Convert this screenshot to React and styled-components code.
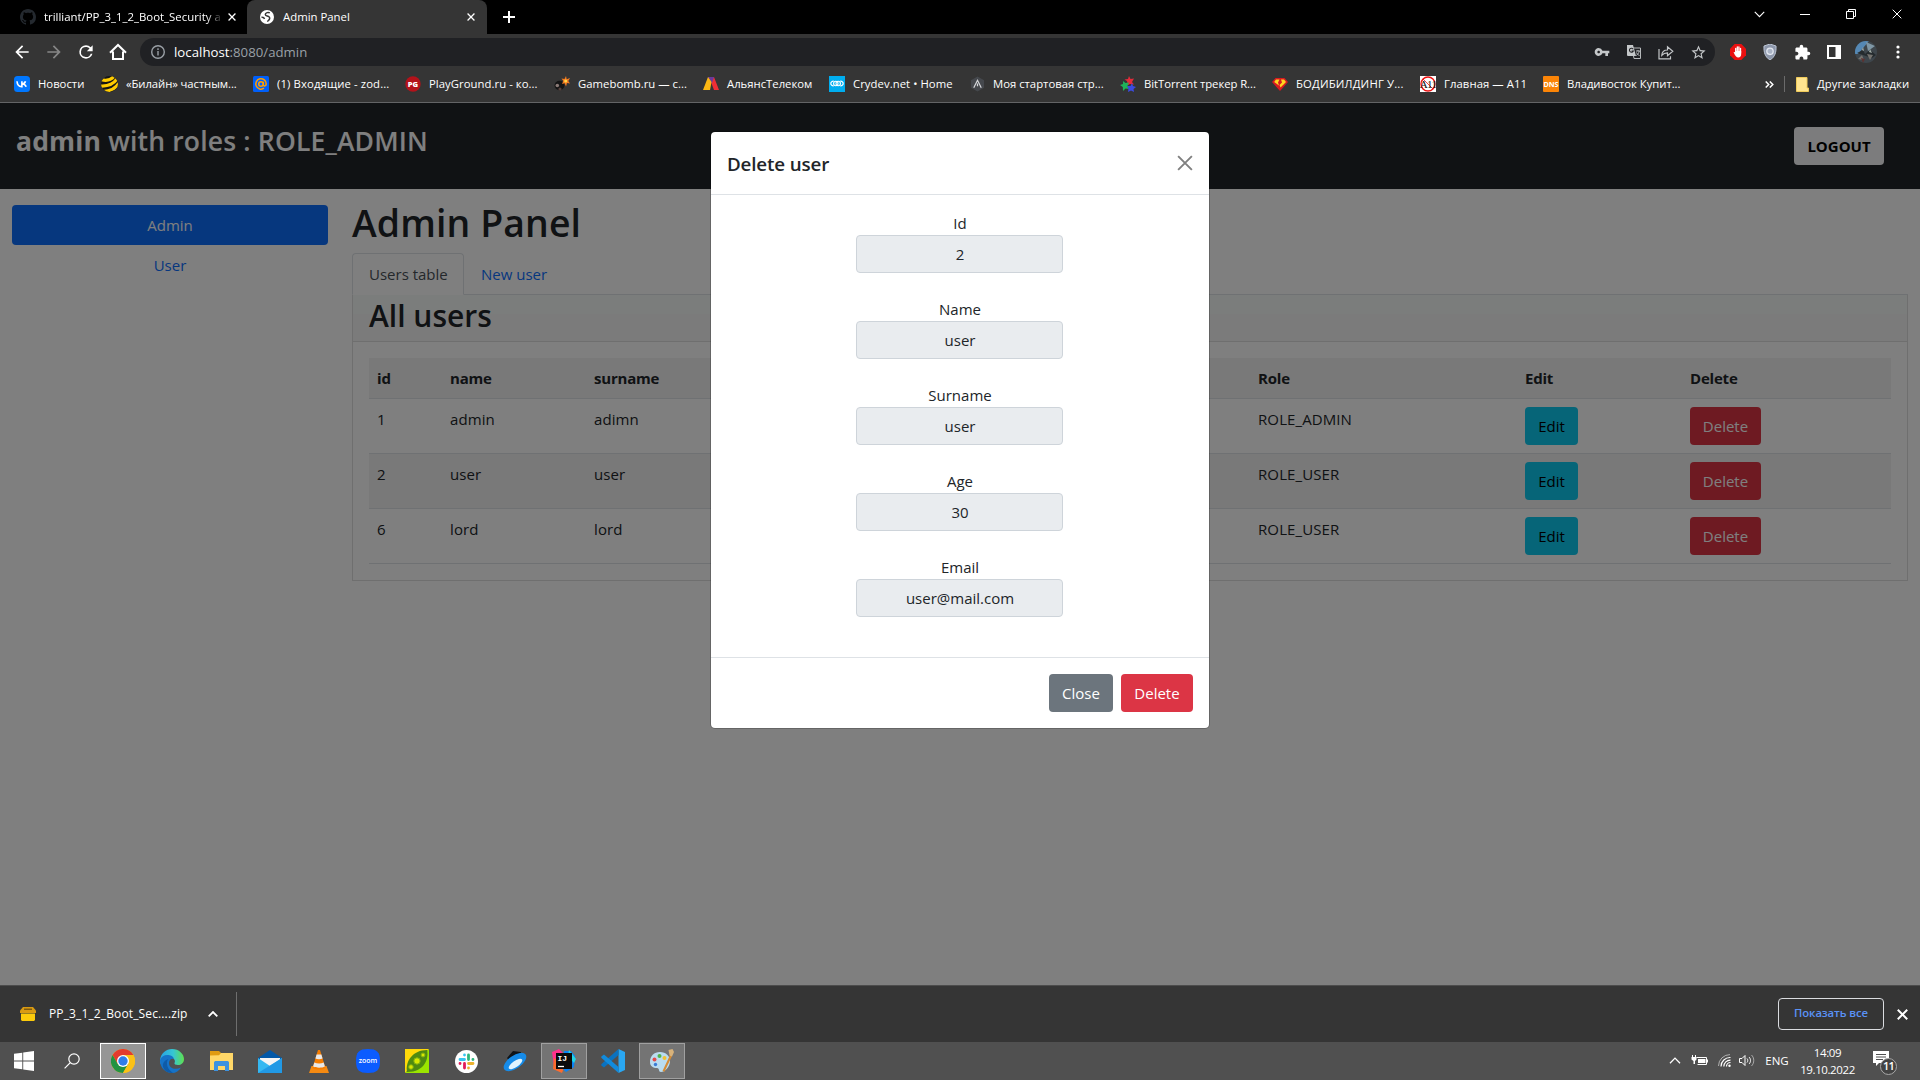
import React from "react";
import styled, { createGlobalStyle } from "styled-components";

const GlobalStyle = createGlobalStyle`
  * { box-sizing: border-box; }
  html, body { margin: 0; padding: 0; background: #000; overflow: hidden; }
  body { font-family: "Open Sans", "Noto Sans", sans-serif; font-size: 15px; line-height: 24px; color: #212529; }
  svg { display: block; flex: none; }
`;

const Screen = styled.div`
  width: 1920px;
  height: 1080px;
  display: flex;
  flex-direction: column;
  overflow: hidden;
`;

/* ---------- browser chrome ---------- */
const TabStrip = styled.div`
  height: 34px;
  background: #000;
  display: flex;
  align-items: stretch;
  color: #fff;
  font-size: 11.4px;
  line-height: 34px;
`;
const Tab = styled.div`
  width: ${(p) => p.$w}px;
  padding: 0 ${(p) => (p.$active ? 12 : 11)}px 0 ${(p) => p.$pl}px;
  display: flex;
  align-items: center;
  gap: 8px;
  background: ${(p) => (p.$active ? "#353535" : "transparent")};
  border-radius: 8px 8px 0 0;
`;
const TabTitle = styled.span`
  flex: 1;
  min-width: 0;
  white-space: nowrap;
  letter-spacing: ${(p) => p.$ls || 0}px;
  ${(p) => p.$fade && "mask-image: linear-gradient(90deg, #000 92%, transparent 102%);"}
`;
const PlusBox = styled.div`
  width: 44px;
  display: flex;
  align-items: center;
  justify-content: center;
`;
const WindowControls = styled.div`
  margin-left: auto;
  padding-bottom: 6px;
  display: flex;
`;
const WindowButton = styled.div`
  width: 46px;
  display: flex;
  align-items: center;
  justify-content: center;
`;

const Toolbar = styled.div`
  height: 34px;
  background: #353535;
  display: flex;
  align-items: center;
  padding: 2px 6px 0 6px;
`;
const ToolIcon = styled.div`
  width: 32px;
  height: 28px;
  display: flex;
  align-items: center;
  justify-content: center;
  color: ${(p) => p.$c || "#fff"};
`;
const AddressBar = styled.div`
  height: 28px;
  width: 1575px;
  margin: 0 7px 0 6px;
  padding: 0 1px 0 10px;
  border-radius: 14px;
  background: #202124;
  display: flex;
  align-items: center;
  font-size: 13.2px;
  color: #9aa0a6;
`;
const Url = styled.span`
  flex: 1;
  margin-left: 8px;
  letter-spacing: 0.03px;
  b { font-weight: 400; color: #fff; }
`;

const BookmarksBar = styled.div`
  height: 35px;
  background: #353535;
  border-bottom: 1px solid #636466;
  padding: 0 0 2px 14px;
  display: flex;
  align-items: center;
  font-size: 11.3px;
  line-height: 16px;
  color: #fff;
`;
const Bookmark = styled.div`
  width: ${(p) => p.$w}px;
  display: flex;
  align-items: center;
  gap: 8px;
  white-space: nowrap;
  letter-spacing: ${(p) => p.$ls || 0}px;
`;
const BookmarksEnd = styled.div`
  margin-left: auto;
  padding-right: 10px;
  display: flex;
  align-items: center;
  white-space: nowrap;
`;
const BarDivider = styled.div`
  width: 1px;
  height: 16px;
  background: #6b6b6b;
  margin: 0 11px 0 10px;
`;

/* ---------- page ---------- */
const Page = styled.main`
  position: relative;
  height: 882px;
  background: #fff;
`;
const Navbar = styled.header`
  height: 86px;
  background: #212529;
  padding: 24px 36px 0 16px;
  display: flex;
  justify-content: space-between;
  align-items: flex-start;
`;
const Brand = styled.div`
  font-size: 26.5px;
  line-height: 28px;
  font-weight: 600;
  color: #fff;
  white-space: nowrap;
  letter-spacing: 0.17px;
  b { font-weight: 700; }
`;
const Btn = styled.button`
  height: 38px;
  width: ${(p) => p.$w}px;
  border: 0;
  padding: 0 0 1px;
  border-radius: 4px;
  background: ${(p) => p.$bg};
  color: ${(p) => p.$c || "#fff"};
  font: ${(p) => (p.$bold ? 700 : 400)} 15px/24px "Open Sans", "Noto Sans", sans-serif;
`;
const Columns = styled.div`
  display: flex;
  padding: 16px 12px 0 12px;
`;
const Sidebar = styled.nav`
  width: 316px;
  margin-right: 24px;
  text-align: center;
`;
const Pill = styled.div`
  height: 40px;
  padding-top: 8px;
  border-radius: 4px;
  line-height: 24px;
  background: ${(p) => (p.$active ? "#0d6efd" : "transparent")};
  color: ${(p) => (p.$active ? "#fff" : "#0d6efd")};
`;
const Content = styled.section`
  width: 1556px;
`;
const PageTitle = styled.h1`
  margin: 0;
  height: 48px;
  font-size: 37.4px;
  line-height: 36px;
  font-weight: 600;
  letter-spacing: 0.1px;
`;
const Tabs = styled.div`
  height: 42px;
  display: flex;
  border-bottom: 1px solid #dee2e6;
`;
const NavTab = styled.div`
  height: 42px;
  width: ${(p) => p.$w}px;
  padding: 8px 16px 0;
  white-space: nowrap;
  border: 1px solid ${(p) => (p.$active ? "#dee2e6" : "transparent")};
  border-bottom-color: ${(p) => (p.$active ? "#fff" : "transparent")};
  border-radius: 4px 4px 0 0;
  color: ${(p) => (p.$active ? "#495057" : "#0d6efd")};
`;
const Card = styled.div`
  border: 1px solid #dfdfdf;
  border-top: 0;
`;
const CardHeader = styled.div`
  height: 47px;
  padding: 0 16px;
  background: linear-gradient(#f7fbf9 0 19px, #f7f7f7 19px);
  border-bottom: 1px solid #dfdfdf;
  font-size: 30px;
  line-height: 41px;
  font-weight: 600;
`;
const CardBody = styled.div`
  padding: 16px;
`;
const Table = styled.div`
  display: flex;
  flex-direction: column;
`;
const Row = styled.div`
  display: grid;
  grid-template-columns: 73px 144px 664px 267px 165px 1fr;
  height: ${(p) => (p.$head ? 41 : 55)}px;
  background: ${(p) => (p.$shade ? "#f2f2f2" : "transparent")};
  border-bottom: 1px solid #dee2e6;
  font-weight: ${(p) => (p.$head ? 700 : 400)};
  letter-spacing: ${(p) => (p.$head ? -0.2 : 0.1)}px;
`;
const Cell = styled.div`
  padding: 8px 8px 0;
`;

/* ---------- modal ---------- */
const Backdrop = styled.div`
  position: absolute;
  inset: 0;
  background: rgba(0, 0, 0, 0.5);
  display: flex;
  justify-content: center;
  align-items: flex-start;
  padding-top: 28px;
`;
const Modal = styled.div`
  width: 500px;
  background: #fff;
  background-clip: padding-box;
  border: 1px solid rgba(0, 0, 0, 0.2);
  border-radius: 5px;
`;
const ModalHeader = styled.div`
  height: 63px;
  padding: 1px 16px 0;
  display: flex;
  align-items: center;
  justify-content: space-between;
  border-bottom: 1px solid #dee2e6;
  font-size: 18.8px;
  font-weight: 600;
  letter-spacing: -0.15px;
  svg { margin-top: -2px; }
`;
const ModalBody = styled.div`
  padding: 16px;
  height: 462px;
  display: flex;
  flex-direction: column;
  align-items: center;
  gap: 24px;
`;
const Field = styled.label`
  display: flex;
  flex-direction: column;
  align-items: center;
  line-height: 24px;
  height: 62px;
`;
const Value = styled.div`
  width: 207px;
  height: 38px;
  margin-right: 1px;
  padding: 6px 0 0 1px;
  text-align: center;
  background: #e9ecef;
  border: 1px solid #ced4da;
  border-radius: 4px;
`;
const ModalFooter = styled.div`
  height: 71px;
  border-top: 1px solid #dee2e6;
  padding: 16px;
  display: flex;
  justify-content: flex-end;
  gap: 8px;
`;

/* ---------- downloads shelf ---------- */
const Shelf = styled.div`
  height: 57px;
  background: #353535;
  border-top: 1px solid #4c4c4c;
  display: flex;
  align-items: center;
  padding: 0 12px 0 20px;
  color: #fff;
  font-size: 12px;
`;
const FileName = styled.span`
  margin-left: 13px;
  width: 159px;
  white-space: nowrap;
  letter-spacing: 0.13px;
`;
const ShelfDivider = styled.div`
  width: 1px;
  height: 44px;
  margin-left: 18px;
  background: #6e6e6e;
`;
const ShowAll = styled.div`
  margin: 0 13px 1px auto;
  width: 106px;
  height: 32px;
  border: 1px solid #dadce0;
  border-radius: 4px;
  color: #5a92f5;
  font-size: 11.3px;
  font-weight: 600;
  line-height: 28px;
  text-align: center;
  letter-spacing: -0.1px;
`;

/* ---------- taskbar ---------- */
const Taskbar = styled.div`
  height: 38px;
  background: #505050;
  display: flex;
  align-items: center;
  color: #fff;
`;
const TaskItem = styled.div`
  width: ${(p) => p.$w || 46}px;
  height: 36px;
  margin-right: ${(p) => p.$mr ?? 3}px;
  display: flex;
  align-items: center;
  justify-content: center;
  border: 1px solid ${(p) => (p.$active ? "#fff" : p.$open ? "#a0a0a0" : "transparent")};
  background: ${(p) => (p.$active ? "#969696" : p.$open ? "#747474" : "transparent")};
`;
const Tray = styled.div`
  margin-left: auto;
  display: flex;
  align-items: center;
  padding: 0 29px 1px 0;
`;
const TrayText = styled.span`
  width: ${(p) => p.$w}px;
  margin-left: ${(p) => p.$ml || 0}px;
  font-size: 11.5px;
  line-height: 17px;
  display: flex;
  flex-direction: column;
  align-items: center;
  white-space: nowrap;
  letter-spacing: ${(p) => p.$ls || 0}px;
`;
const Slot = styled.div`
  margin-left: ${(p) => p.$ml}px;
`;
const Notice = styled.div`
  position: relative;
  margin-left: 18px;
  width: 18px;
  height: 20px;
`;
const NoticeBadge = styled.span`
  position: absolute;
  left: 7px;
  top: 7px;
  width: 17px;
  height: 17px;
  border-radius: 9px;
  border: 1px solid #a8a8a8;
  background: #434343;
  font-size: 11px;
  font-weight: 600;
  line-height: 14px;
  text-align: center;
  letter-spacing: -0.7px;
`;

/* ---------- icons ---------- */
const M = ({ d, s = 20, ...r }) => (
  <svg width={s} height={s} viewBox="0 0 24 24" fill="currentColor" {...r}><path d={d} /></svg>
);
const Cross = ({ s = 8, w = 1.6, c = "#fff" }) => (
  <svg width={s} height={s} viewBox="0 0 10 10" stroke={c} strokeWidth={w}><path d="M.7.7 9.3 9.3M9.3.7.7 9.3" /></svg>
);
const Chevron = ({ w = 10, h = 6, up, sw = 1.3 }) => (
  <svg width={w} height={h} viewBox="0 0 10 6" fill="none" stroke="#fff" strokeWidth={sw}>
    <path d={up ? "M.7 5.3 5 1l4.3 4.3" : "M.7.7 5 5 9.3.7"} />
  </svg>
);
const Github = () => (
  <svg width="16" height="16" viewBox="0 0 16 16" fill="#24292f"><path d="M8 0C3.58 0 0 3.58 0 8c0 3.54 2.29 6.53 5.47 7.59.4.07.55-.17.55-.38 0-.19-.01-.82-.01-1.49-2.01.37-2.53-.49-2.69-.94-.09-.23-.48-.94-.82-1.13-.28-.15-.68-.52-.01-.53.63-.01 1.08.58 1.23.82.72 1.21 1.87.87 2.33.66.07-.52.28-.87.51-1.07-1.78-.2-3.64-.89-3.64-3.95 0-.87.31-1.59.82-2.15-.08-.2-.36-1.02.08-2.12 0 0 .67-.21 2.2.82.64-.18 1.32-.27 2-.27s1.36.09 2 .27c1.53-1.04 2.2-.82 2.2-.82.44 1.1.16 1.92.08 2.12.51.56.82 1.27.82 2.15 0 3.07-1.87 3.75-3.65 3.95.29.25.54.73.54 1.48 0 1.07-.01 1.93-.01 2.2 0 .21.15.46.55.38A8.01 8.01 0 0 0 16 8c0-4.42-3.58-8-8-8z" /></svg>
);
const Globe = () => (
  <svg width="14" height="14" viewBox="0 0 14 14"><circle cx="7" cy="7" r="7" fill="#fff" /><path d="M9.800 2.800C8.300 2 5.500 2.600 5.300 4.400c-.2 1.700 1.500 1.500 2.700 1.900 1.500.5 2.200 1.800 1.300 3.200-.6.9-1.600 1-1.700 2.300M1.500 7.200c1.300-.1 2.700.5 3 1.800" fill="none" stroke="#353535" strokeWidth="1.500" /></svg>
);

const VkIcon = () => (
  <svg width="16" height="16" viewBox="0 0 16 16"><rect width="16" height="16" rx="3.5" fill="#07f" /><path d="M3 5.300c.2 3.200 1.800 5.400 4.600 5.400h.3V5.300M7.900 8c1.900 0 3.100-1.100 3.600-2.700M8 8c2 0 3.500 1.100 4.200 2.700" fill="none" stroke="#fff" strokeWidth="1.600" /></svg>
);
const BeelineIcon = () => (
  <svg width="17" height="16" viewBox="0 0 17 16"><defs><clipPath id="bee"><ellipse cx="8.500" cy="8" rx="8.500" ry="7.900" /></clipPath></defs><g clipPath="url(#bee)"><rect width="17" height="16" fill="#161616" /><g fill="none" stroke="#fc0" strokeWidth="3.200"><path d="M0 3.500Q8 6 13 .5M0 10Q11 10.500 16 3M2 15.500Q13 15 18 7" /></g></g></svg>
);
const AtIcon = () => (
  <svg width="16" height="16" viewBox="0 0 16 16"><rect width="16" height="16" rx="1.500" fill="#005ff9" /><g fill="none" stroke="#ff9e00" strokeWidth="1.500"><circle cx="8" cy="8" r="2.300" /><path d="M10.300 5.800v3c0 1.800 2.900 1.500 2.900-.8A5.200 5.200 0 1 0 11 12.200" /></g></svg>
);
const PgIcon = () => (
  <svg width="16" height="16" viewBox="0 0 16 16"><circle cx="8" cy="8" r="7.700" fill="#b3121a" /><text x="8" y="11" textAnchor="middle" fontSize="7.500" fontWeight="800" fill="#fff" fontFamily="Open Sans">PG</text></svg>
);
const BombIcon = () => (
  <svg width="16" height="16" viewBox="0 0 16 16"><ellipse cx="5.500" cy="9.500" rx="5" ry="4.700" fill="#151515" /><circle cx="3.300" cy="9.500" r="1.800" fill="#8b7b77" /><circle cx="6" cy="13" r="1.600" fill="#57413c" /><path d="M12 0l.7 3.200L16 2l-1.700 3 1.700 2.500-3-.5-1 3.500-1.300-3.300L8 8l1.300-3L7.500 2.500l3 .6z" fill="#f47b20" /><circle cx="11.700" cy="5" r="1.500" fill="#ffd84a" /></svg>
);
const AllianceIcon = () => (
  <svg width="16" height="16" viewBox="0 0 16 16"><path d="M5 1h6l5 13h-5L8 6z" fill="#ee2e36" /><path d="M5 1h6L9 7 6 6z" fill="#683a9c" /><path d="M5 1l3.500 5L7 14H0z" fill="#fdb813" /></svg>
);
const CrydevIcon = () => (
  <svg width="16" height="16" viewBox="0 0 16 16"><rect width="16" height="16" fill="#00adef" /><g fill="none" stroke="#fff" strokeWidth="1.100"><path d="M4.800 5C3 5.200 1.800 6.200 1.800 7.500S3 9.800 4.800 10M11.200 5c1.800.2 3 1.200 3 2.500s-1.200 2.300-3 2.500" /><circle cx="6.800" cy="7.500" r="2.200" /><circle cx="9.200" cy="7.500" r="2.200" /></g></svg>
);
const HexIcon = () => (
  <svg width="15" height="16" viewBox="0 0 16 16"><path d="M8 0l7 4v8l-7 4-7-4V4z" fill="#45484d" /><path d="M4 12l4-8 4 8M8 7.500v3" fill="none" stroke="#d5d7da" strokeWidth="1.300" /></svg>
);
const TrackerIcon = () => (
  <svg width="16" height="16" viewBox="0 0 16 16"><path d="M9 0l1.500 3 3.500-.5-2 3.500 2 2.500-4-.5L8 9 7 5 4.500 3.500 8 3z" fill="#e62b3a" /><path d="M3 5l2.500 2L9 6.500 7.500 10 9 13l-3.500-.5L3 15l-.2-4L0 9l3-1z" fill="#1fb25a" /><path d="M12 7l1 3 3 1-2.500 2 .5 3-3-1.500L8 16l.5-3.500L7 10l3.500 0z" fill="#3b4be0" /></svg>
);
const HeroIcon = () => (
  <svg width="16" height="14" viewBox="0 0 16 14"><path d="M3.500 1h9L16 5l-8 9L0 5z" fill="#d91920" /><path d="M4 2.500h3.500L6 5.500l1 3L2.200 5zM9 2.500h3L14 5l-5.500 5.500L7.500 8 10 5.500z" fill="#ffd51e" /></svg>
);
const A11Icon = () => (
  <svg width="16" height="16" viewBox="0 0 16 16"><rect width="16" height="16" fill="#fff" /><circle cx="8" cy="8" r="7" fill="none" stroke="#e11" strokeWidth="1.400" /><path d="M3 3l10 10" stroke="#e11" strokeWidth=".8" /><text x="8" y="12" textAnchor="middle" fontSize="11" letterSpacing="-.6" fill="#111" fontFamily="Liberation Serif">A11</text></svg>
);
const DnsIcon = () => (
  <svg width="16" height="16" viewBox="0 0 16 16"><rect width="16" height="16" rx="1" fill="#fc8507" /><text x="8" y="11" textAnchor="middle" fontSize="7.200" fontWeight="700" fill="#fff" fontFamily="Open Sans">DNS</text></svg>
);
const FolderNote = () => (
  <svg width="13" height="15" viewBox="0 0 13 15"><path d="M.5.500h10.500v10.500h1.500v3.500H.5z" fill="#ffe48f" stroke="#f0cb5a" /></svg>
);

const bookmarks = [
  [87, "Новости", VkIcon, 0],
  [152, "«Билайн» частным...", BeelineIcon, -0.08],
  [152, "(1) Входящие - zod...", AtIcon, 0.12],
  [149, "PlayGround.ru - ко...", PgIcon, 0.05],
  [149, "Gamebomb.ru — с...", BombIcon, 0.04],
  [126, "АльянсТелеком", AllianceIcon, 0],
  [141, "Crydev.net • Home", CrydevIcon, 0.06],
  [150, "Моя стартовая стр...", HexIcon, 0],
  [152, "BitTorrent трекер R...", TrackerIcon, -0.06],
  [148, "БОДИБИЛДИНГ У...", HeroIcon, 0.18],
  [123, "Главная — А11", A11Icon, 0.08],
  [140, "Владивосток Купит...", DnsIcon, -0.04],
];

const users = [
  ["1", "admin", "adimn", "ROLE_ADMIN"],
  ["2", "user", "user", "ROLE_USER"],
  ["6", "lord", "lord", "ROLE_USER"],
];
const fields = [["Id", "2"], ["Name", "user"], ["Surname", "user"], ["Age", "30"], ["Email", "user@mail.com"]];

/* taskbar pictures */
const ChromeLogo = () => (
  <svg width="24" height="24" viewBox="0 0 24 24"><circle cx="12" cy="12" r="12" fill="#fbc116" /><path d="M12 6h10.400A12 12 0 0 0 1.600 6L6.800 15z" fill="#e33b2e" /><path d="M1.600 6A12 12 0 0 0 12 24l5.200-9-10.400 0z" fill="#229342" /><path d="M12 24A12 12 0 0 0 22.400 6H12l5.200 9z" fill="#fbc116" /><circle cx="12" cy="12" r="6" fill="#fff" /><circle cx="12" cy="12" r="4.700" fill="#2f7de9" /></svg>
);
const EdgeLogo = () => (
  <svg width="24" height="24" viewBox="0 0 24 24"><defs><linearGradient id="eg" x1="0" x2="1"><stop offset="0" stopColor="#27a3e6" /><stop offset=".55" stopColor="#36c6d3" /><stop offset="1" stopColor="#5fe04f" /></linearGradient></defs><path d="M0 11C1 4 6 0 12 0c7 0 12 5 12 10 0 4-3 6-6 6-2.500 0-4-.8-3.500-2 1.500-3-1-5.500-4.500-5.500C5 8.500 1.500 13 3 18 1 16 0 14 0 11z" fill="url(#eg)" /><path d="M0 11C1.500 7 5 5.500 8.500 6c3 .3 5 2 5.500 4-2-1-5 .5-5 4 0 5 6 7.500 12 4.500C19 22 16 24 12 24 5 24 0 18.500 0 11z" fill="#1673c8" /><path d="M8.500 10C6 12.500 6 19.500 13 23.900 6 24.500 2 19 3 15c.7-2.500 3-4.500 5.500-5z" fill="#0f5ba8" /></svg>
);
const ExplorerLogo = () => (
  <svg width="23" height="20" viewBox="0 0 23 20"><path d="M0 0h9l2 2v3H0z" fill="#e09b12" /><path d="M0 4.500l9-.2L11 2h12v17H0z" fill="#ffd768" /><path d="M4 20v-8.500C4 10.500 5 10 6 10h11c1 0 2 .5 2 1.500V20h-4v-5H8v5z" fill="#3d92df" /></svg>
);
const MailLogo = () => (
  <svg width="24" height="23" viewBox="0 0 24 23"><path d="M0 8L12 0l12 8v3H0z" fill="#0358a7" /><path d="M2 8h20v8H2z" fill="#f4f4f4" /><path d="M0 8l12 8 12-8v15H0z" fill="#35b8f1" /><path d="M0 23L24 8v15z" fill="#2199e5" /></svg>
);
const VlcLogo = () => (
  <svg width="20" height="23" viewBox="0 0 20 23"><path d="M2.500 16h15L20 23H0z" fill="#f58a12" /><path d="M9 0h2l5.500 18c-3 2-10 2-13 0z" fill="#f57c00" /><path d="M7.600 4.500h4.800l1.200 4c-2 1-5.200 1-7.200 0zM5.300 12.500c3 1.300 6.500 1.300 9.400 0l1.200 4c-3 1.600-8.600 1.600-11.800 0z" fill="#e8e8e8" /></svg>
);
const ZoomLogo = () => (
  <svg width="24" height="24" viewBox="0 0 24 24"><path d="M12 0c9 0 12 3 12 12s-3 12-12 12S0 21 0 12 3 0 12 0z" fill="#0b5cff" /><text x="12" y="14.300" textAnchor="middle" fontSize="7" fontWeight="600" fill="#fff" fontFamily="Open Sans">zoom</text></svg>
);
const PeaLogo = () => (
  <svg width="24" height="24" viewBox="0 0 24 24"><path d="M0 0h24L0 24z" fill="#ffd90a" /><path d="M24 0v24H0z" fill="#9be500" /><path d="M22 1c2 8-2 22-20 22C0 12 8 1 22 1z" fill="#4f8a10" /><g fill="#d8e800" stroke="#7fae10"><circle cx="18" cy="6" r="2" /><circle cx="12" cy="12" r="3.200" /><circle cx="6" cy="18" r="2.300" /></g></svg>
);
const SlackLogo = () => (
  <svg width="23" height="23" viewBox="0 0 23 23"><circle cx="11.500" cy="11.500" r="11.500" fill="#fff" /><g strokeWidth="2.800" strokeLinecap="round"><path d="M9.500 5v.1M5 9.500h4.500" stroke="#36c5f0" /><path d="M13.500 5v4.500M18 9.500h-.1" stroke="#2eb67d" /><path d="M13.500 13.500H18M13.500 18v-.1" stroke="#ecb22e" /><path d="M9.500 13.500V18M5 13.500h.1" stroke="#e01e5a" /></g></svg>
);
const PlanetLogo = () => (
  <svg width="24" height="22" viewBox="0 0 24 22"><path d="M4 8L10 1l8 1 1 4-12 6z" fill="#101418" /><ellipse cx="12" cy="12" rx="13" ry="6.500" transform="rotate(-35 12 12)" fill="#168be8" /><ellipse cx="12.500" cy="14" rx="8" ry="3.200" transform="rotate(-35 12.500 14)" fill="#dff3ff" /></svg>
);
const IdeaLogo = () => (
  <svg width="24" height="24" viewBox="0 0 24 24"><path d="M0 3L7 0l5 5-2 14-8-2z" fill="#ff318c" /><path d="M2 9l-1 11 9 4 3-8z" fill="#fe6b2d" /><path d="M12 2l7 0 4 5-1 11-8 5-4-4z" fill="#0a84f5" /><path d="M17 1l7 9-2 4-6-7z" fill="#20d7e6" /><rect x="4" y="4" width="16" height="16" fill="#0b0b0b" /><text x="5.500" y="12" fontSize="8" fontWeight="700" fill="#fff" fontFamily="Liberation Mono">IJ</text><path d="M6 17.500h6" stroke="#fff" strokeWidth="1.300" /></svg>
);
const CodeLogo = () => (
  <svg width="24" height="24" viewBox="0 0 24 24"><path d="M17.500 0L24 3v18l-6.500 3z" fill="#2aa7f2" /><path d="M17.500 0v6L3 18.500.3 16.500v-1.200z" fill="#0a72c0" /><path d="M17.500 24v-6L3 5.500.3 7.500v1.200z" fill="#118bdd" /></svg>
);
const PaintLogo = () => (
  <svg width="24" height="24" viewBox="0 0 24 24"><path d="M10 3c6 0 10 4 10 9 0 6-5 11-9 11-3 0-1-4-4-4-4 0-7-2-7-6C0 7 4 3 10 3z" fill="#b9dcf0" /><circle cx="4.500" cy="10.500" r="2" fill="#e34b4b" /><circle cx="9.500" cy="7" r="2" fill="#52b54b" /><circle cx="14.500" cy="9" r="2" fill="#f1c232" /><circle cx="5.500" cy="15.500" r="1.700" fill="#3a7bd5" /><path d="M20 6L12.500 22l2 .8L22 7z" fill="#d58b35" /><path d="M18.500 1l4-1 1.500 3-2 4.500-2.500-1z" fill="#d8b27a" /></svg>
);
const tasks = [
  [ChromeLogo, "active"], [EdgeLogo], [ExplorerLogo], [MailLogo], [VlcLogo], [ZoomLogo], [PeaLogo],
  [SlackLogo], [PlanetLogo], [IdeaLogo, "open"], [CodeLogo], [PaintLogo, "open"],
];

export default function App() {
  return (
    <Screen>
      <GlobalStyle />
      <TabStrip>
        <Tab $w={247} $pl={20}>
          <Github />
          <TabTitle $fade>trilliant/PP_3_1_2_Boot_Security a</TabTitle>
          <Cross />
        </Tab>
        <Tab $w={240} $pl={13} $active>
          <Globe />
          <TabTitle $ls={-0.03}>&#8202;Admin Panel</TabTitle>
          <Cross />
        </Tab>
        <PlusBox>
          <svg width="12" height="12" stroke="#fff" strokeWidth="2"><path d="M6 0v12M0 6h12" /></svg>
        </PlusBox>
        <WindowControls>
          <WindowButton><Chevron w={11} h={7} sw={1} /></WindowButton>
          <WindowButton><svg width="10" height="1"><rect width="10" height="1" fill="#fff" /></svg></WindowButton>
          <WindowButton><svg width="10" height="10" fill="none" stroke="#fff"><path d="M.5 2.500h7v7h-7zM2.500 2.500v-2h7v7h-2" /></svg></WindowButton>
          <WindowButton><Cross s={10} w={1} /></WindowButton>
        </WindowControls>
      </TabStrip>

      <Toolbar>
        <ToolIcon><M d="M20 11H7.830l5.590-5.590L12 4l-8 8 8 8 1.410-1.410L7.830 13H20v-2z" /></ToolIcon>
        <ToolIcon $c="#868686"><M d="M12 4l-1.410 1.410L16.170 11H4v2h12.170l-5.580 5.590L12 20l8-8z" /></ToolIcon>
        <ToolIcon><M d="M17.650 6.350A7.958 7.958 0 0 0 12 4a8 8 0 1 0 7.730 10h-2.080A6 6 0 1 1 12 6c1.660 0 3.140.690 4.220 1.780L13 11h7V4l-2.350 2.350z" /></ToolIcon>
        <ToolIcon><svg width="18" height="18" viewBox="0 0 18 18" fill="none" stroke="#fff" strokeWidth="2"><path d="M4 8.500V16h10V8.500M1 9.700l8-7.700 8 7.700" /></svg></ToolIcon>
        <AddressBar>
          <svg width="16" height="16" viewBox="0 0 16 16" fill="none" stroke="#9aa0a6" strokeWidth="1.400"><circle cx="8" cy="8" r="6.300" /><path d="M8 7v4.500M8 4.300V6" /></svg>
          <Url><b>localhost</b>:8080/admin</Url>
          <ToolIcon $c="#c4c7c9"><M s={16} d="M12.650 10A5.990 5.990 0 0 0 7 6c-3.310 0-6 2.690-6 6s2.690 6 6 6a5.990 5.990 0 0 0 5.650-4H17v4h4v-4h2v-4H12.650zM7 14c-1.100 0-2-.9-2-2s.9-2 2-2 2 .9 2 2-.9 2-2 2z" /></ToolIcon>
          <ToolIcon>
            <svg width="14" height="14" viewBox="0 0 14 14"><path d="M5 3h8.500v10.500H7z" fill="none" stroke="#b5b8ba" /><path d="M0 0h6l3 11H1a1 1 0 0 1-1-1z" fill="#c4c7c9" /><path d="M6.200 4.200A2 2 0 1 0 6.300 6H4.600" fill="none" stroke="#202124" strokeWidth="1.100" /><path d="M9 6h4M11 5v1M12.300 6c-.5 2-1.500 3.500-3 4.500M9.500 7.500c.6 1.500 1.600 2.400 3 3" fill="none" stroke="#c4c7c9" strokeWidth=".9" /></svg>
          </ToolIcon>
          <ToolIcon>
            <svg width="16" height="15" viewBox="0 0 16 15" fill="none" stroke="#c4c7c9" strokeWidth="1.200"><path d="M1 4v9.800h11.500v-2.600M3.800 10.300C4 6.500 6.500 5 9.500 5V1.700l5.300 4.600-5.300 4.500V7.900c-2.500 0-4.200.6-5.700 2.400z" /></svg>
          </ToolIcon>
          <ToolIcon $c="#c4c7c9"><M s={17} d="M22 9.240l-7.190-.620L12 2 9.190 8.630 2 9.240l5.460 4.730L5.820 21 12 17.270 18.180 21l-1.630-7.030L22 9.240zM12 15.400l-3.760 2.270 1-4.280-3.320-2.880 4.380-.380L12 6.100l1.710 4.040 4.380.380-3.320 2.880 1 4.280L12 15.400z" /></ToolIcon>
        </AddressBar>
        <ToolIcon>
          <svg width="16" height="16" viewBox="0 0 16 16"><path d="M4.700 0h6.600L16 4.700v6.600L11.300 16H4.700L0 11.300V4.700z" fill="#ea1010" /><path d="M5.700 9V4.500M7.300 8V3M8.900 8V3M10.500 9V4.300" stroke="#fff" strokeWidth="1.300" strokeLinecap="round" /><path d="M3.600 8.300c.8-.6 1.500 0 2 .8V7h5.600v3c0 2-1 3.500-2.900 3.500S5.300 12 3.600 8.300z" fill="#fff" /></svg>
        </ToolIcon>
        <ToolIcon>
          <svg width="14" height="16" viewBox="0 0 14 16"><path d="M7 0l6 2c.4 6-1 11-6 14C2 13 .6 8 1 2z" fill="#8d97ab" stroke="#bcc5d4" /><circle cx="7" cy="7.300" r="3.200" fill="#aab4c6" stroke="#e3e8f0" strokeWidth="1.300" /></svg>
        </ToolIcon>
        <ToolIcon><M s={17} d="M20.500 11H19V7c0-1.100-.9-2-2-2h-4V3.500a2.500 2.500 0 0 0-5 0V5H4c-1.100 0-1.990.9-1.990 2v3.800H3.500c1.490 0 2.700 1.210 2.700 2.700s-1.210 2.700-2.700 2.700H2V20c0 1.100.9 2 2 2h3.800v-1.500c0-1.490 1.210-2.700 2.700-2.700s2.700 1.210 2.700 2.700V22H17c1.100 0 2-.9 2-2v-4h1.500a2.500 2.500 0 0 0 0-5z" /></ToolIcon>
        <ToolIcon><svg width="14" height="14"><path fillRule="evenodd" d="M0 0h14v14H0zM2 2v10h6.500V2z" fill="#fff" /></svg></ToolIcon>
        <ToolIcon>
          <svg width="22" height="22" viewBox="0 0 22 22"><defs><clipPath id="av"><circle cx="11" cy="11" r="11" /></clipPath></defs><g clipPath="url(#av)"><rect width="22" height="22" fill="#3e464c" /><path d="M0 0h14L3 13H0z" fill="#5588b4" /><path d="M11 1l9 4-7 5z" fill="#7f97a5" /><path d="M2 12l6-3 2 4 5-4 6 5-4 3z" fill="#252b2e" /><path d="M3 18l4-4 2 5zM12 13l3 6 3-5z" fill="#75736f" /><path d="M6 17l4 1-2 4z" fill="#5c3230" /><path d="M7 9l1-3 1 4zM14 11l1-3 2 4z" fill="#a5b0ab" /></g></svg>
        </ToolIcon>
        <ToolIcon><svg width="4" height="14" fill="#fff"><circle cx="2" cy="2" r="1.600" /><circle cx="2" cy="7" r="1.600" /><circle cx="2" cy="12" r="1.600" /></svg></ToolIcon>
      </Toolbar>

      <BookmarksBar>
        {bookmarks.map(([w, t, Icon, ls]) => (
          <Bookmark key={t} $w={w} $ls={ls}><Icon />{t}</Bookmark>
        ))}
        <BookmarksEnd>
          <svg width="9" height="7" viewBox="0 0 9 7" fill="none" stroke="#fff" strokeWidth="1.500"><path d="M.7.500l3 3-3 3M4.800.500l3 3-3 3" /></svg>
          <BarDivider />
          <Bookmark $w={114} $ls={0.05}><FolderNote />Другие закладки</Bookmark>
        </BookmarksEnd>
      </BookmarksBar>

      <Page>
        <Navbar>
          <Brand><b>admin</b> with roles : ROLE_ADMIN</Brand>
          <Btn $w={90} $bg="#f8f9fa" $c="#000" $bold>LOGOUT</Btn>
        </Navbar>
        <Columns>
          <Sidebar>
            <Pill $active>Admin</Pill>
            <Pill>User</Pill>
          </Sidebar>
          <Content>
            <PageTitle>Admin Panel</PageTitle>
            <Tabs>
              <NavTab $w={112} $active>Users table</NavTab>
              <NavTab $w={101}>New user</NavTab>
            </Tabs>
            <Card>
              <CardHeader>All users</CardHeader>
              <CardBody>
                <Table>
                  <Row $head $shade>
                    <Cell>id</Cell><Cell>name</Cell><Cell>surname</Cell><Cell>Role</Cell><Cell>Edit</Cell><Cell>Delete</Cell>
                  </Row>
                  {users.map((u, i) => (
                    <Row key={u[0]} $shade={i === 1}>
                      {u.map((v, j) => <Cell key={j}>{v}</Cell>)}
                      <Cell><Btn $w={53} $bg="#0dcaf0" $c="#000">Edit</Btn></Cell>
                      <Cell><Btn $w={71} $bg="#dc3545">Delete</Btn></Cell>
                    </Row>
                  ))}
                </Table>
              </CardBody>
            </Card>
          </Content>
        </Columns>
        <Backdrop>
          <Modal>
            <ModalHeader>
              <span>Delete user</span>
              <Cross s={16} w={1.2} c="#808080" />
            </ModalHeader>
            <ModalBody>
              {fields.map(([l, v]) => (
                <Field key={l}>{l}<Value>{v}</Value></Field>
              ))}
            </ModalBody>
            <ModalFooter>
              <Btn $w={64} $bg="#6c757d">Close</Btn>
              <Btn $w={72} $bg="#dc3545">Delete</Btn>
            </ModalFooter>
          </Modal>
        </Backdrop>
      </Page>

      <Shelf>
        <svg width="16" height="14" viewBox="0 0 16 14"><path d="M3 0h10l3 3.500V6H0V3.500z" fill="#d99a12" /><path d="M4 1.500h8V3H4z" fill="#7d5a10" /><path d="M1 6.500h14V13l-1 1H2l-1-1z" fill="#fccb0b" /></svg>
        <FileName>PP_3_1_2_Boot_Sec....zip</FileName>
        <Chevron up sw={1.8} />
        <ShelfDivider />
        <ShowAll>Показать все</ShowAll>
        <Cross s={11} w={1.8} />
      </Shelf>

      <Taskbar>
        <TaskItem $w={48} $mr={0}><svg width="20" height="20" viewBox="0 0 20 20" fill="#fff"><path d="M0 2.800l8.300-1.100v7.900H0zM9.200 1.600L20 0v9.600H9.200zM0 10.400h8.300v7.900L0 17.200zM9.200 10.400H20V20L9.200 18.400z" /></svg></TaskItem>
        <TaskItem $w={48} $mr={4}><svg width="16" height="16" viewBox="0 0 16 16" fill="none" stroke="#fff" strokeWidth="1.200"><circle cx="10" cy="6" r="5.200" /><path d="M6.300 9.700L.6 15.400" /></svg></TaskItem>
        {tasks.map(([Logo, state], i) => (
          <TaskItem key={i} $active={state === "active"} $open={state === "open"}><Logo /></TaskItem>
        ))}
        <Tray>
          <Chevron w={12} h={7} up sw={1.1} />
          <Slot $ml={10}><svg width="17" height="12" viewBox="0 0 17 12"><path d="M5.500 2.500h10v7h-9" fill="none" stroke="#fff" /><path d="M7 4h7.500v4H7zM16 4.500h1v3h-1zM1 0h1v2h2V0h1v2h.500v2.500L4 6v3H2.500V6L.5 4.500V2H1z" fill="#fff" /></svg></Slot>
          <Slot $ml={10}><svg width="13" height="13" viewBox="0 0 13 13" fill="none" stroke="#fff"><path d="M.5 12A11.500 11.500 0 0 1 12 .600" opacity=".55" /><path d="M3 12.500A9 9 0 0 1 12.500 3.500M5.800 12.500a6.500 6.500 0 0 1 6.700-6.400M8.500 12.500a4 4 0 0 1 4-4" strokeWidth="1.200" /><circle cx="11.500" cy="11.800" r="1.200" fill="#fff" stroke="none" /></svg></Slot>
          <Slot $ml={8}><svg width="17" height="13" viewBox="0 0 17 13" fill="none" stroke="#fff"><path d="M.5 4.500H3L6 1.500v10l-3-3H.5zM8 4.500c1 1 1 3 0 4M10 3c2 2 2 5 0 7" /><path d="M12.500 1c3 3 3 8 0 11" opacity=".5" /></svg></Slot>
          <TrayText $w={24} $ml={9}>ENG</TrayText>
          <TrayText $w={55} $ml={11} $ls={-0.4}><span>14:09</span><span>19.10.2022</span></TrayText>
          <Notice>
            <svg width="16" height="15" viewBox="0 0 16 15"><path d="M0 0h16v12H6l-3 3v-3H0z" fill="#fff" /><path d="M3 3.500h10M3 6h10M3 8.500h7" stroke="#505050" /></svg>
            <NoticeBadge>11</NoticeBadge>
          </Notice>
        </Tray>
      </Taskbar>
    </Screen>
  );
}
